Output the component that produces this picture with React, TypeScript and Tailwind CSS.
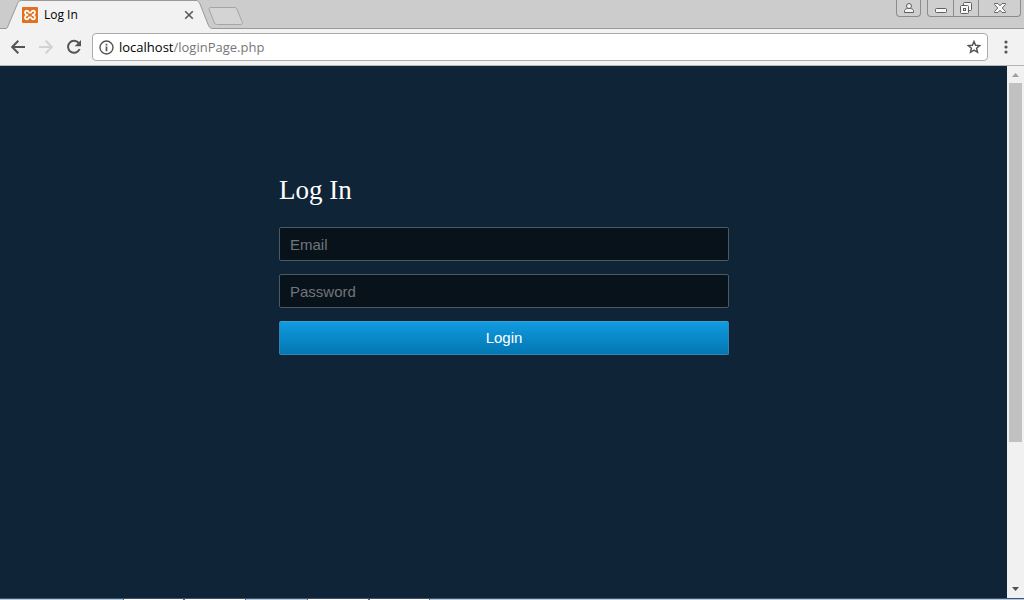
import React from "react";

function BrowserTab() {
  return (
    <div className="relative flex h-[29px] w-[208px] shrink-0 items-center pl-4 pr-[19px]">
      <svg className="absolute inset-0 h-full w-full" viewBox="0 0 208 29" preserveAspectRatio="none" aria-hidden="true">
        <path d="M0 29V28.5C1 28.5 1.400 27.5 2 26L11.500 3.500C12.400 1.500 13.400 .5 15.500 .5H190C192 .5 193 1.700 194 4L202.500 25.500C203.300 27.500 204.500 28.500 207 28.500V29Z" fill="#f2f2f2" />
        <path d="M0 28.500C1 28.500 1.400 27.500 2 26L11.500 3.500C12.400 1.500 13.400 .5 15.500 .5H190C192 .5 193 1.700 194 4L202.500 25.500C203.300 27.500 204.500 28.500 208 28.500" fill="none" stroke="#999999" />
      </svg>
      <svg className="relative size-4 shrink-0" viewBox="0 0 16 16" aria-hidden="true">
        <rect width="16" height="16" rx="1" fill="#e2701f" />
        <path d="M5.500 8C3.400 7.400 3 6.600 3 5.500C3 4.200 3.800 3.700 5 3.700C6.700 3.700 6.400 5.600 7.200 5.600H8.800C9.600 5.600 9.300 3.700 11 3.700C12.200 3.700 13 4.200 13 5.500C13 6.600 12.600 7.400 10.500 8C12.600 8.600 13 9.400 13 10.500C13 11.800 12.200 12.300 11 12.300C9.300 12.300 9.600 10.400 8.800 10.400H7.200C6.400 10.400 6.700 12.300 5 12.300C3.800 12.300 3 11.800 3 10.500C3 9.400 3.400 8.600 5.500 8Z" fill="none" stroke="#fff" strokeWidth="1.700" strokeLinejoin="round" />
      </svg>
      <span className="relative ml-1.5 flex-1 text-xs text-black">Log In</span>
      <button type="button" aria-label="Close tab" className="relative flex size-3 items-center justify-center">
        <svg className="size-2.5" viewBox="0 0 10 10" aria-hidden="true">
          <path d="M1.200 1.200 8.800 8.800M8.800 1.200 1.200 8.800" stroke="#5a5a5a" strokeWidth="1.600" />
        </svg>
      </button>
    </div>
  );
}

function WindowControls() {
  return (
    <div className="ml-auto mr-[3px] flex h-[17px] items-stretch gap-1.5">
      <button type="button" aria-label="User profile" className="flex w-[25px] items-center justify-center rounded-b border border-t-0 border-[#8c8c8c] bg-[#cfcfcf]">
        <svg className="h-3 w-3" viewBox="0 0 12 12" fill="#f4f4f4" stroke="#5f5f5f" aria-hidden="true">
          <path d="M1.500 10.500V8.500C2 7.300 3.500 6.500 4.500 6.500H7.500C8.500 6.500 10 7.300 10.500 8.500V10.500Z" />
          <circle cx="6" cy="4" r="2.500" />
        </svg>
      </button>
      <div className="flex w-[94px] overflow-hidden rounded-b border border-t-0 border-[#8c8c8c] bg-[#cfcfcf]">
        <button type="button" aria-label="Minimize" className="flex w-[25px] items-center justify-center">
          <svg className="h-4 w-3" viewBox="0 0 12 16" aria-hidden="true">
            <rect x=".5" y="8.500" width="11" height="4" rx="1" fill="#f8f8f8" stroke="#5f5f5f" />
          </svg>
        </button>
        <button type="button" aria-label="Restore" className="flex w-[26px] items-center justify-center border-x border-[#8c8c8c]">
          <svg className="h-4 w-[14px]" viewBox="0 0 14 16" fill="#f8f8f8" stroke="#5f5f5f" aria-hidden="true">
            <rect x="4.500" y="2.500" width="8" height="8" rx="1" />
            <rect x="1.500" y="5.500" width="8" height="8" rx="1" />
            <rect x="4.500" y="8.500" width="2" height="2" />
          </svg>
        </button>
        <button type="button" aria-label="Close" className="flex flex-1 items-center justify-center">
          <svg className="h-4 w-3" viewBox="0 0 12 16" aria-hidden="true">
            <path d="M.5 3.500H4L6 5.800 8 3.500H11.500V4.500L8.200 8 11.500 11.500V12.500H8L6 10.200 4 12.500H.5V11.500L3.800 8 .5 4.500Z" fill="#f8f8f8" stroke="#666" />
          </svg>
        </button>
      </div>
    </div>
  );
}

function Toolbar() {
  return (
    <div className="flex h-[37px] shrink-0 items-center border-b border-[#b6b6b6] bg-[#f2f2f2] pl-[11px]">
      <button type="button" aria-label="Back">
        <svg className="h-4 w-[15px]" viewBox="0 0 15 16" fill="none" stroke="#555" strokeWidth="2" aria-hidden="true">
          <path d="M14 8H1.500M7.300 1.700 1.200 8 7.300 14.300" />
        </svg>
      </button>
      <button type="button" aria-label="Forward" className="ml-[13px]">
        <svg className="h-4 w-[15px]" viewBox="0 0 15 16" fill="none" stroke="#d2d2d2" strokeWidth="2" aria-hidden="true">
          <path d="M0 8H12.500M6.700 1.700 12.800 8 6.700 14.300" />
        </svg>
      </button>
      <button type="button" aria-label="Reload" className="ml-3">
        <svg className="size-4" viewBox="0 0 16 16" aria-hidden="true">
          <path d="M12.700 4A6 6 0 1 0 13.600 10" fill="none" stroke="#555" strokeWidth="2" />
          <path d="M15 1V7.300H8.700Z" fill="#555" />
        </svg>
      </button>
      <div className="ml-2.5 flex h-7 flex-1 items-center rounded-sm border border-[#ababab] bg-white px-1.5">
        <svg className="size-[15px] shrink-0" viewBox="0 0 15 15" aria-hidden="true">
          <circle cx="7.500" cy="7.500" r="6.500" fill="none" stroke="#555" strokeWidth="1.400" />
          <path d="M7.500 6.500V11.200M7.500 3.700V5.400" stroke="#555" strokeWidth="1.700" />
        </svg>
        <div className="ml-[5px] flex-1 text-[13px] leading-5 text-[#777]">
          <span className="text-black">localhost</span>/loginPage.php
        </div>
        <button type="button" aria-label="Bookmark this page">
          <svg className="size-[14px]" viewBox="0 0 14 14" aria-hidden="true">
            <path d="M7 1.500 8.600 5.200 12.700 5.600 9.600 8.300 10.500 12.300 7 10.200 3.500 12.300 4.400 8.300 1.300 5.600 5.400 5.200Z" fill="none" stroke="#555" strokeWidth="1.500" />
          </svg>
        </button>
      </div>
      <button type="button" aria-label="Menu" className="flex w-9 justify-center">
        <svg className="h-4 w-1" viewBox="0 0 4 16" fill="#555" aria-hidden="true">
          <circle cx="2" cy="3" r="1.600" />
          <circle cx="2" cy="8" r="1.600" />
          <circle cx="2" cy="13" r="1.600" />
        </svg>
      </button>
    </div>
  );
}

function LoginForm() {
  const field =
    "h-[34px] w-full rounded-xs border border-[#4b5961] bg-[#08121b] px-2.5 text-[15px] text-white outline-none placeholder:text-[#727579]";
  return (
    <form className="mx-auto flex w-full max-w-[450px] flex-col gap-[13px] font-['Liberation_Sans',Arial,sans-serif]" onSubmit={(e: React.FormEvent) => e.preventDefault()}>
      <h1 className="mb-2 font-['Liberation_Serif',serif] text-[27px] leading-8 text-white">Log In</h1>
      <input type="email" aria-label="Email" placeholder="Email" className={field} />
      <input type="password" aria-label="Password" placeholder="Password" className={field} />
      <button type="submit" className="h-[34px] w-full rounded-xs border border-[#3185b0] border-t-[#3fa0d0] bg-linear-to-b from-[#109be0] to-[#0377b2] text-[15px] text-white">
        Login
      </button>
    </form>
  );
}

function Scrollbar() {
  return (
    <div className="flex w-[17px] shrink-0 flex-col items-center bg-[#f1f1f1]" aria-hidden="true">
      <svg className="size-[17px] shrink-0" viewBox="0 0 17 17">
        <path d="M5 11 8.500 7 12 11Z" fill="#a0a0a0" />
      </svg>
      <div className="flex w-full flex-1 flex-col px-0.5">
        <div className="basis-[72%] bg-[#c1c1c1]" />
      </div>
      <svg className="size-[17px] shrink-0" viewBox="0 0 17 17">
        <path d="M5 6 8.500 10 12 6Z" fill="#505050" />
      </svg>
    </div>
  );
}

export default function App() {
  return (
    <div className="flex min-h-screen flex-col bg-[#102438] font-['Open_Sans','Noto_Sans',sans-serif]">
      <header>
        <div className="flex h-[29px] items-start border-b border-[#999] bg-[#cccccc] pl-1.5">
          <BrowserTab />
          <button type="button" aria-label="New tab" className="mt-[7px] -ml-1.5">
            <svg className="h-[18px] w-9" viewBox="0 0 36 18" aria-hidden="true">
              <path d="M2.500 .5H26C28 .5 28.500 1 29.200 2.800L34 14.500C34.700 16.500 34.500 17.500 32.500 17.500H9.500C7.500 17.500 6.700 16.800 6 15L1.300 3C.7 1.500 1 .5 2.500 .5Z" fill="#d4d4d4" stroke="#a5a5a5" />
            </svg>
          </button>
          <WindowControls />
        </div>
        <Toolbar />
      </header>
      <div className="flex flex-1">
        <main className="flex-1 pl-px pt-[108px]">
          <LoginForm />
        </main>
        <Scrollbar />
      </div>
      <footer className="flex h-0.5 shrink-0 border-t border-[#40546a] bg-[#b5cbe3]">
        <div className="w-[12%]" />
        <div className="w-[6%] border-x border-[#666] bg-white" />
        <div className="w-[6%] border-x border-[#666] bg-white" />
        <div className="w-[6%]" />
        <div className="w-[6%] border-x border-[#666] bg-white" />
        <div className="w-[6%] border-x border-[#666] bg-white" />
      </footer>
    </div>
  );
}
